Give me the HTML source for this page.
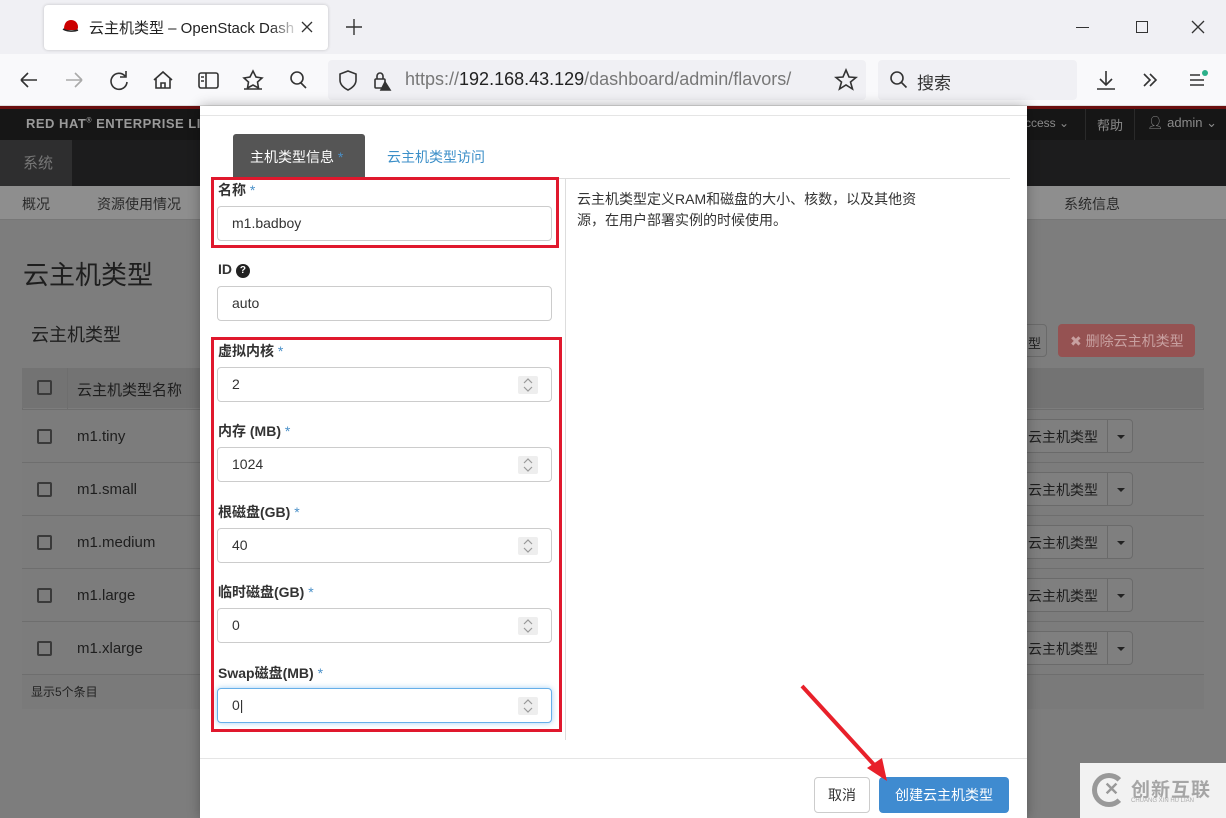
<!DOCTYPE html>
<html><head><meta charset="utf-8"><style>
*{box-sizing:border-box;margin:0;padding:0}
body{width:1226px;height:818px;overflow:hidden;position:relative;font-family:"Liberation Sans","Noto Sans CJK SC",sans-serif;background:#7d7d7d;color:#222}
.a{position:absolute}
.inp{position:absolute;left:217px;width:335px;height:35px;border:1px solid #ccc;border-radius:4px;background:#fff;font-size:14px;padding:8px 14px;color:#333}
.spin{position:absolute;right:13px;top:8px;width:20px;height:18px;background:#eee;border-radius:2px}
.spin svg{display:block}
.lbl{position:absolute;left:218px;font-size:14px;font-weight:bold;color:#333}
.lbl i{font-style:normal;color:#4a90c8;font-weight:normal}
.row{position:absolute;left:22px;width:1182px;height:53px;border-top:1px solid #6e6e6e;background:#7c7c7c}
.cb{position:absolute;left:15px;width:15px;height:15px;border:2px solid #3a3a3a;border-radius:2px}
.rn{position:absolute;left:55px;font-size:15px;color:#1e1e1e}
.rb{position:absolute;left:978px;width:133px;height:34px;border:1px solid #6a6a6a;border-radius:4px;background:#7f7f7f;font-size:14px;color:#1e1e1e}
.rb span{position:absolute;left:27px;top:7px;white-space:nowrap}
.rb b{position:absolute;left:106px;top:0;width:1px;height:32px;background:#6a6a6a}
.rb em{position:absolute;left:116px;top:15px;width:0;height:0;border-left:4px solid transparent;border-right:4px solid transparent;border-top:4px solid #222}
</style></head><body>
<!-- browser tab bar -->
<div class="a" style="left:0;top:0;width:1226px;height:54px;background:#f0f0f4"></div>
<div class="a" style="left:44px;top:5px;width:284px;height:45px;background:#fff;border-radius:4px;box-shadow:0 0 3px rgba(0,0,0,.2)"></div>
<svg class="a" style="left:62px;top:18px" width="18" height="16"><path d="M2 11c0-6 3-9 7-9s7 3 7 7c0 2-1 3-3 3l-11 0z" fill="#c00"/><path d="M1 11c3 2 10 3 15 1" stroke="#222" stroke-width="1.5" fill="none"/></svg>
<div class="a" style="left:89px;top:17px;width:206px;overflow:hidden;font-size:15px;color:#222;white-space:nowrap">云主机类型 – OpenStack Dashboard</div>
<div class="a" style="left:270px;top:10px;width:30px;height:35px;background:linear-gradient(90deg,rgba(255,255,255,0),#fff)"></div>
<svg class="a" style="left:301px;top:21px" width="12" height="12" stroke="#333" stroke-width="1.3"><path d="M1 1l10 10M11 1L1 11"/></svg>
<svg class="a" style="left:346px;top:19px" width="16" height="16" stroke="#333" stroke-width="1.4"><path d="M8 0v16M0 8h16"/></svg>
<div class="a" style="left:1076px;top:27px;width:13px;height:1px;background:#333"></div>
<div class="a" style="left:1136px;top:21px;width:12px;height:12px;border:1px solid #333"></div>
<svg class="a" style="left:1191px;top:20px" width="14" height="14" stroke="#333" stroke-width="1.3"><path d="M1 1l12 12M13 1L1 13"/></svg>
<!-- nav bar -->
<div class="a" style="left:0;top:54px;width:1226px;height:52px;background:#f9f9fb;border-bottom:1px solid #ddd"></div>
<svg class="a" style="left:18px;top:68px" width="300" height="24" fill="none" stroke="#333" stroke-width="1.6">
<path d="M3 12h16M3 12l7-7M3 12l7 7"/>
<path d="M48 12h16M64 12l-7-7M64 12l-7 7" stroke="#aaa"/>
<path d="M107 8a8 8 0 1 0 2 6M108 3v6h-6"/>
<path d="M136 12l9-8 9 8M138 10v10h14V10M143 20v-5h4v5"/>
<rect x="181" y="5" width="19" height="15" rx="2"/><path d="M188 5v15M183 9h3M183 13h3"/>
<path d="M235 3l3 6 6 1-4.5 4 1 6-5.5-3-5.5 3 1-6-4.5-4 6-1z M226 21h18"/>
<circle cx="279" cy="10" r="6"/><path d="M283 15l5 5"/>
</svg>
<div class="a" style="left:328px;top:60px;width:538px;height:40px;background:#f0f0f4;border-radius:4px"></div>
<svg class="a" style="left:336px;top:68px" width="60" height="24" fill="none" stroke="#333" stroke-width="1.6"><path d="M12 3l8 3v6c0 5-4 8-8 10-4-2-8-5-8-10V6z"/><rect x="39" y="11" width="10" height="9" rx="1"/><path d="M41 11V8a3 3 0 0 1 6 0v3"/><path d="M49 14l5 8h-9z" fill="#333"/></svg>
<div class="a" style="left:405px;top:69px;font-size:18px;color:#777;white-space:nowrap">https://<span style="color:#222">192.168.43.129</span>/dashboard/admin/flavors/</div>
<svg class="a" style="left:834px;top:68px" width="24" height="24" fill="none" stroke="#333" stroke-width="1.6"><path d="M12 2l3 7 7 .5-5.5 4.5 2 7-6.5-4-6.5 4 2-7L2 9.5 9 9z"/></svg>
<div class="a" style="left:878px;top:60px;width:199px;height:40px;background:#f0f0f4;border-radius:4px"></div>
<svg class="a" style="left:889px;top:70px" width="20" height="20" fill="none" stroke="#333" stroke-width="1.6"><circle cx="8" cy="8" r="6"/><path d="M12.5 12.5l5 5"/></svg>
<div class="a" style="left:917px;top:69px;font-size:17px;color:#333">搜索</div>
<svg class="a" style="left:1094px;top:68px" width="120" height="24" fill="none" stroke="#333" stroke-width="1.6"><path d="M12 3v13M6 11l6 6 6-6M3 21h18"/><path d="M50 6l6 6-6 6M56 6l6 6-6 6"/><path d="M96 7h10M96 12h14M96 17h14"/><circle cx="111" cy="5" r="3" fill="#2bb08a" stroke="none"/></svg>
<!-- page background -->
<div class="a" style="left:0;top:106px;width:1226px;height:3px;background:#6a0f0f"></div>
<div class="a" style="left:0;top:109px;width:1226px;height:31px;background:#161616"></div>
<div class="a" style="left:26px;top:116px;font-size:13px;font-weight:bold;color:#9a9a9a;letter-spacing:.5px;white-space:nowrap">RED HAT<sup style="font-size:7px">®</sup> ENTERPRISE LI</div>
<div class="a" style="left:1025px;top:116px;font-size:12px;color:#8a8a8a;white-space:nowrap">ccess ⌄</div>
<div class="a" style="left:1085px;top:109px;width:1px;height:31px;background:#2a2a2a"></div>
<div class="a" style="left:1097px;top:115px;font-size:13px;color:#8a8a8a">帮助</div>
<div class="a" style="left:1134px;top:109px;width:1px;height:31px;background:#2a2a2a"></div>
<div class="a" style="left:1147px;top:115px;font-size:13px;color:#8a8a8a;white-space:nowrap">👤︎ admin ⌄</div>
<div class="a" style="left:0;top:140px;width:1226px;height:46px;background:#1c1c1d"></div>
<div class="a" style="left:0;top:140px;width:72px;height:46px;background:#2e2e2f"></div>
<div class="a" style="left:23px;top:152px;font-size:15px;color:#777">系统</div>
<div class="a" style="left:0;top:186px;width:1226px;height:34px;background:#8e8e8e;border-bottom:1px solid #777"></div>
<div class="a" style="left:22px;top:194px;font-size:14px;color:#2a2a2a">概况</div>
<div class="a" style="left:97px;top:194px;font-size:14px;color:#2a2a2a">资源使用情况</div>
<div class="a" style="left:1064px;top:194px;font-size:14px;color:#2a2a2a">系统信息</div>
<div class="a" style="left:23px;top:255px;font-size:26px;color:#1e1e1e">云主机类型</div>
<div class="a" style="left:31px;top:321px;font-size:18px;color:#1e1e1e">云主机类型</div>
<div class="a" style="left:1010px;top:324px;width:37px;height:33px;border:1px solid #6a6a6a;border-radius:4px;font-size:13px;color:#222;padding:8px 0 0 17px">型</div>
<div class="a" style="left:1058px;top:324px;width:137px;height:33px;background:#955252;border-radius:4px;font-size:14px;color:#c8a0a0;padding:7px 0 0 12px;white-space:nowrap">✖ 删除云主机类型</div>
<div class="a" style="left:22px;top:368px;width:1182px;height:341px;border:1px solid #6e6e6e"></div>
<div class="a" style="left:22px;top:368px;width:1182px;height:40px;background:#737373"></div>
<div class="a" style="left:67px;top:368px;width:1px;height:306px;background:#6e6e6e"></div>
<div class="cb a" style="left:37px;top:380px"></div>
<div class="a" style="left:77px;top:379px;font-size:15px;color:#1e1e1e">云主机类型名称</div>
<div class="row" style="top:409px"><div class="cb" style="top:19px"></div><div class="rn" style="top:18px">m1.tiny</div><div class="rb" style="top:9px"><span>云主机类型</span><b></b><em></em></div></div>
<div class="row" style="top:462px"><div class="cb" style="top:19px"></div><div class="rn" style="top:18px">m1.small</div><div class="rb" style="top:9px"><span>云主机类型</span><b></b><em></em></div></div>
<div class="row" style="top:515px"><div class="cb" style="top:19px"></div><div class="rn" style="top:18px">m1.medium</div><div class="rb" style="top:9px"><span>云主机类型</span><b></b><em></em></div></div>
<div class="row" style="top:568px"><div class="cb" style="top:19px"></div><div class="rn" style="top:18px">m1.large</div><div class="rb" style="top:9px"><span>云主机类型</span><b></b><em></em></div></div>
<div class="row" style="top:621px"><div class="cb" style="top:19px"></div><div class="rn" style="top:18px">m1.xlarge</div><div class="rb" style="top:9px"><span>云主机类型</span><b></b><em></em></div></div>
<div class="a" style="left:22px;top:674px;width:1182px;height:35px;border-top:1px solid #6e6e6e;background:#7a7a7a"></div>
<div class="a" style="left:31px;top:683px;font-size:12px;color:#222">显示5个条目</div>
<!-- modal -->
<div class="a" style="left:200px;top:106px;width:827px;height:712px;background:#fff;box-shadow:0 0 12px rgba(0,0,0,.3)"></div>
<div class="a" style="left:200px;top:115px;width:827px;height:1px;background:#e5e5e5"></div>
<div class="a" style="left:233px;top:134px;width:132px;height:45px;background:#555;border-radius:3px 3px 0 0"></div>
<div class="a" style="left:250px;top:147px;font-size:14px;color:#fff">主机类型信息 <span style="color:#4a90c8">*</span></div>
<div class="a" style="left:387px;top:147px;font-size:14px;color:#3c8fc8">云主机类型访问</div>
<div class="a" style="left:216px;top:178px;width:794px;height:1px;background:#ddd"></div>
<div class="a" style="left:565px;top:179px;width:1px;height:561px;background:#ddd"></div>
<div class="a" style="left:577px;top:189px;font-size:14px;color:#333;line-height:21px">云主机类型定义RAM和磁盘的大小、核数，以及其他资<br>源，在用户部署实例的时候使用。</div>
<div class="lbl" style="top:180px">名称 <i>*</i></div>
<div class="inp" style="top:206px">m1.badboy</div>
<div class="lbl" style="top:261px">ID <span style="display:inline-block;width:14px;height:14px;border-radius:50%;background:#222;color:#fff;font-size:10px;text-align:center;line-height:14px;vertical-align:1px">?</span></div>
<div class="inp" style="top:286px">auto</div>
<div class="lbl" style="top:341px">虚拟内核 <i>*</i></div>
<div class="inp" style="top:367px">2<div class="spin"><svg width="20" height="18" fill="none" stroke="#999" stroke-width="1.2"><path d="M6 7l4-4 4 4M6 11l4 4 4-4"/></svg></div></div>
<div class="lbl" style="top:421px">内存 (MB) <i>*</i></div>
<div class="inp" style="top:447px">1024<div class="spin"><svg width="20" height="18" fill="none" stroke="#999" stroke-width="1.2"><path d="M6 7l4-4 4 4M6 11l4 4 4-4"/></svg></div></div>
<div class="lbl" style="top:502px">根磁盘(GB) <i>*</i></div>
<div class="inp" style="top:528px">40<div class="spin"><svg width="20" height="18" fill="none" stroke="#999" stroke-width="1.2"><path d="M6 7l4-4 4 4M6 11l4 4 4-4"/></svg></div></div>
<div class="lbl" style="top:582px">临时磁盘(GB) <i>*</i></div>
<div class="inp" style="top:608px">0<div class="spin"><svg width="20" height="18" fill="none" stroke="#999" stroke-width="1.2"><path d="M6 7l4-4 4 4M6 11l4 4 4-4"/></svg></div></div>
<div class="lbl" style="top:663px">Swap磁盘(MB) <i>*</i></div>
<div class="inp" style="top:688px;border-color:#66afe9;box-shadow:0 0 6px rgba(102,175,233,.6)">0|<div class="spin"><svg width="20" height="18" fill="none" stroke="#999" stroke-width="1.2"><path d="M6 7l4-4 4 4M6 11l4 4 4-4"/></svg></div></div>
<!-- red boxes -->
<div class="a" style="left:211px;top:177px;width:348px;height:71px;border:3px solid #e0182d"></div>
<div class="a" style="left:211px;top:337px;width:351px;height:395px;border:3px solid #e0182d"></div>
<!-- footer -->
<div class="a" style="left:200px;top:758px;width:827px;height:1px;background:#e5e5e5"></div>
<div class="a" style="left:814px;top:777px;width:56px;height:36px;border:1px solid #ccc;border-radius:4px;font-size:14px;color:#333;text-align:center;line-height:34px">取消</div>
<div class="a" style="left:879px;top:777px;width:130px;height:36px;background:#3f8bd0;border-radius:4px;font-size:14px;color:#fff;text-align:center;line-height:36px">创建云主机类型</div>
<svg class="a" style="left:795px;top:680px" width="110" height="110"><path d="M7 6L82 88" stroke="#e8202a" stroke-width="4"/><path d="M72 88L92 101 87 78z" fill="#e8202a"/></svg>
<!-- watermark -->
<div class="a" style="left:1080px;top:763px;width:146px;height:55px;background:#f2f2f2"></div>
<div class="a" style="left:1092px;top:773px;width:34px;height:34px;border-radius:50%;border:5px solid #999;border-right-color:transparent"></div>
<div class="a" style="left:1104px;top:779px;font-size:18px;font-weight:bold;color:#999">✕</div>
<div class="a" style="left:1131px;top:775px;font-size:19px;font-weight:bold;color:#a5a5a5;letter-spacing:1px">创新互联</div>
<div class="a" style="left:1131px;top:798px;font-size:6px;color:#aaa;white-space:nowrap">CHUANG XIN HU LIAN</div>
</body></html>
